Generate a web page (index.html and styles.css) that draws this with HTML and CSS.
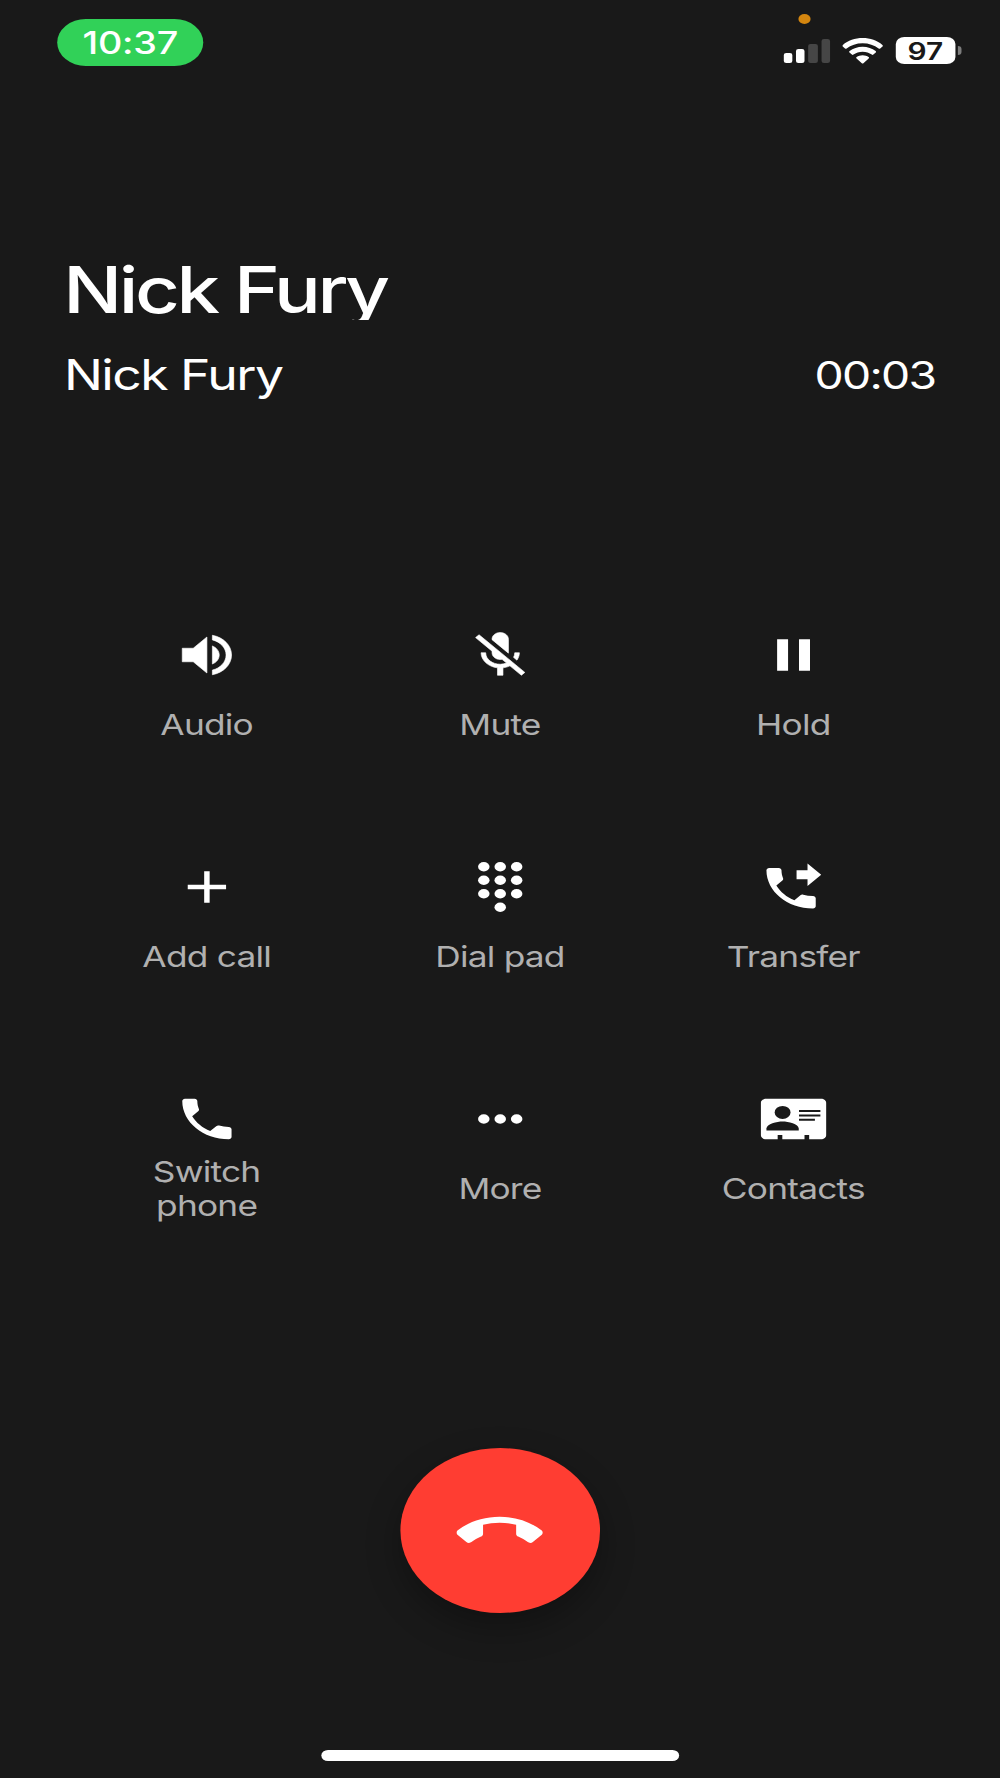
FILE: index.html
```html
<!DOCTYPE html>
<html lang="en">
<head>
    <meta charset="UTF-8">
    <meta name="viewport" content="width=device-width, initial-scale=1.0">
    <title>Call</title>
    <link rel="stylesheet" href="styles.css">
</head>
<body>
    <div class="screen">

        <!-- Status bar -->
        <div class="status-bar">
            <div class="time-pill"><span>10:37</span></div>
            <div class="status-right">
                <div class="mic-dot"></div>
                <div class="status-icons">
                    <div class="signal">
                        <i class="bar bar1"></i>
                        <i class="bar bar2"></i>
                        <i class="bar bar3"></i>
                        <i class="bar bar4"></i>
                    </div>
                    <svg class="wifi" viewBox="0 0 41 26" preserveAspectRatio="none">
                        <path d="M20.5 0C12.8 0 5.8 2.6.6 6.9c-.6.5-.6 1.1-.1 1.6l2.3 2c.5.4 1.1.4 1.6 0C8.7 7.2 14.3 5.2 20.5 5.2s11.8 2 16.1 5.3c.5.4 1.1.4 1.6 0l2.3-2c.5-.5.5-1.1-.1-1.6C35.2 2.6 28.2 0 20.5 0z"/>
                        <path d="M20.5 8.7c-5 0-9.6 1.6-13.1 4.3-.6.5-.6 1.1-.1 1.5l2.4 2.1c.5.4 1.1.4 1.6 0 2.5-1.8 5.7-2.9 9.2-2.9s6.7 1.1 9.2 2.9c.5.4 1.1.4 1.6 0l2.4-2.1c.5-.4.5-1-.1-1.5-3.5-2.7-8.1-4.3-13.1-4.3z"/>
                        <path d="M20.5 17.3c-2.3 0-4.4.7-6 1.8-.6.4-.6 1-.1 1.4l5.3 4.7c.5.4 1.1.4 1.6 0l5.3-4.7c.5-.4.5-1-.1-1.4-1.6-1.1-3.7-1.8-6-1.8z"/>
                    </svg>
                    <div class="battery"><span>97</span></div>
                    <div class="battery-tip"></div>
                </div>
            </div>
        </div>

        <!-- Caller info -->
        <div class="caller">
            <h1 class="caller-name">Nick Fury</h1>
            <div class="caller-row">
                <span class="caller-number">Nick Fury</span>
                <span class="timer">00:03</span>
            </div>
        </div>

        <!-- Call controls -->
        <div class="controls">
            <div class="control">
                <svg class="icon heavy" viewBox="0 0 24 24"><path d="M3 9v6h4l5 5V4L7 9H3zm13.5 3c0-1.77-1.02-3.29-2.5-4.03v8.05c1.48-.73 2.5-2.25 2.5-4.02zM14 3.23v2.06c2.89.86 5 3.54 5 6.71s-2.11 5.85-5 6.71v2.06c4.01-.91 7-4.49 7-8.77s-2.99-7.86-7-8.77z"/></svg>
                <div class="label"><span>Audio</span></div>
            </div>
            <div class="control">
                <svg class="icon heavy" viewBox="0 0 24 24"><path d="M19 11h-1.7c0 .74-.16 1.43-.43 2.05l1.23 1.23c.56-.98.9-2.09.9-3.28zm-4.02.17c0-.06.02-.11.02-.17V5c0-1.66-1.34-3-3-3S9 3.34 9 5v.18l5.98 5.99zM4.27 3L3 4.27l6.01 6.01V11c0 1.66 1.33 3 2.99 3 .22 0 .44-.03.65-.08l1.66 1.66c-.71.33-1.5.52-2.31.52-2.76 0-5.3-2.1-5.3-5.1H5c0 3.41 2.72 6.23 6 6.72V21h2v-3.28c.91-.13 1.77-.45 2.54-.9L19.73 21 21 19.73 4.27 3z"/></svg>
                <div class="label"><span>Mute</span></div>
            </div>
            <div class="control">
                <svg class="icon" viewBox="0 0 24 24"><path d="M6 19h4V5H6v14zm8-14v14h4V5h-4z"/></svg>
                <div class="label"><span>Hold</span></div>
            </div>
            <div class="control">
                <svg class="icon" viewBox="0 0 24 24"><path d="M19 13h-6v6h-2v-6H5v-2h6V5h2v6h6v2z"/></svg>
                <div class="label"><span>Add call</span></div>
            </div>
            <div class="control">
                <svg class="icon" viewBox="0 0 24 24">
                    <circle cx="6" cy="3" r="2.1"/><circle cx="12" cy="3" r="2.1"/><circle cx="18" cy="3" r="2.1"/>
                    <circle cx="6" cy="9" r="2.1"/><circle cx="12" cy="9" r="2.1"/><circle cx="18" cy="9" r="2.1"/>
                    <circle cx="6" cy="15" r="2.1"/><circle cx="12" cy="15" r="2.1"/><circle cx="18" cy="15" r="2.1"/>
                    <circle cx="12" cy="21" r="2.1"/>
                </svg>
                <div class="label"><span>Dial pad</span></div>
            </div>
            <div class="control">
                <svg class="icon" viewBox="0.9 -0.5 24 24"><path d="M18 11l5-5-5-5v3h-4v4h4v3zm2 4.5c-1.25 0-2.45-.2-3.57-.57-.35-.11-.74-.03-1.02.24l-2.2 2.2c-2.83-1.44-5.15-3.75-6.59-6.59l2.2-2.21c.28-.26.36-.65.25-1C8.7 6.45 8.5 5.25 8.5 4c0-.55-.45-1-1-1H4c-.55 0-1 .45-1 1 0 9.39 7.61 17 17 17 .55 0 1-.45 1-1v-3.5c0-.55-.45-1-1-1z"/></svg>
                <div class="label"><span>Transfer</span></div>
            </div>
            <div class="control">
                <svg class="icon" viewBox="0 0 24 24"><path d="M20 15.5c-1.25 0-2.45-.2-3.57-.57-.35-.11-.74-.03-1.02.24l-2.2 2.2c-2.83-1.44-5.15-3.75-6.59-6.59l2.2-2.21c.28-.26.36-.65.25-1C8.7 6.45 8.5 5.25 8.5 4c0-.55-.45-1-1-1H4c-.55 0-1 .45-1 1 0 9.39 7.61 17 17 17 .55 0 1-.45 1-1v-3.5c0-.55-.45-1-1-1z"/></svg>
                <div class="label"><span>Switch<br>phone</span></div>
            </div>
            <div class="control">
                <svg class="icon" viewBox="0 0 24 24"><circle cx="6" cy="12" r="2.1"/><circle cx="12" cy="12" r="2.1"/><circle cx="18" cy="12" r="2.1"/></svg>
                <div class="label"><span>More</span></div>
            </div>
            <div class="control">
                <svg class="icon" viewBox="0 0 24 24">
                    <path d="M2 3h20c1.100 0 2 .9 2 2v14c0 1.100-.9 2-2 2h-4.300v-1.900h-1.700V21H7.900v-1.900H6.200V21H2c-1.100 0-2-.9-2-2V5c0-1.100.9-2 2-2z"/>
                    <g class="cutout">
                        <circle cx="8" cy="9.1" r="2.9"/>
                        <path d="M2.1 17.1v-.9c0-2 3.900-3.100 5.900-3.100s5.900 1.100 5.900 3.100v.9z"/>
                        <path d="M14 8h7.800v.9H14zM14 9.950h7.800v.9H14zM14 11.900h5.800v.9H14z"/>
                    </g>
                </svg>
                <div class="label"><span>Contacts</span></div>
            </div>
        </div>

        <button class="end-call" aria-label="End call">
            <svg viewBox="0 0 24 24"><path d="M12 9c-1.6 0-3.15.25-4.6.72v3.1c0 .39-.23.74-.56.9-.98.49-1.87 1.12-2.66 1.85-.18.18-.43.28-.7.28-.28 0-.53-.11-.71-.29L.29 13.08c-.18-.17-.29-.42-.29-.7 0-.28.11-.53.29-.71C3.34 8.78 7.46 7 12 7s8.66 1.78 11.71 4.67c.18.18.29.43.29.71 0 .28-.11.53-.29.71l-2.48 2.48c-.18.18-.43.29-.71.29-.27 0-.52-.11-.7-.28-.79-.74-1.69-1.36-2.67-1.85-.33-.16-.56-.5-.56-.9v-3.1C15.15 9.25 13.6 9 12 9z"/></svg>
        </button>

        <div class="home-bar"></div>
    </div>
</body>
</html>
```
FILE: styles.css
```css
body {
    margin: 0;
    background-color: #191919;
    font-family: Inter, "Liberation Sans", sans-serif;
    color: #fff;
    overflow: hidden;
}

.screen {
    width: 821.6px;
    height: 1778px;
    transform: scaleX(1.2171);
    transform-origin: 0 0;
    display: flex;
    flex-direction: column;
    align-items: center;
}

/* Status bar */
.status-bar {
    width: 100%;
    height: 100px;
    box-sizing: border-box;
    padding: 0 31.5px 0 47px;
    display: flex;
    justify-content: space-between;
    align-items: flex-start;
}

.time-pill {
    width: 120px;
    height: 47px;
    margin-top: 19px;
    border-radius: 24px;
    background-color: #31d158;
    display: flex;
    justify-content: center;
    align-items: center;
    font-size: 31px;
    font-weight: 500;
    letter-spacing: -0.2px;
}

.status-right {
    display: flex;
    flex-direction: column;
    padding-top: 14px;
}

.mic-dot {
    width: 10px;
    height: 10px;
    border-radius: 50%;
    background-color: #d4860f;
    margin-left: 12px;
    margin-bottom: 13px;
}

.status-icons {
    display: flex;
    align-items: center;
    height: 27px;
}

.signal {
    display: flex;
    align-items: flex-end;
    gap: 3px;
    height: 24px;
    margin-right: 10.5px;
}

.bar {
    width: 7.1px;
    border-radius: 2px;
    background-color: #fff;
}

.bar1 { height: 9.5px; }
.bar2 { height: 14px; }
.bar3 { height: 18.5px; background-color: #464646; }
.bar4 { height: 24px; background-color: #464646; }

.wifi {
    width: 33.5px;
    height: 26px;
    fill: #fff;
    margin-right: 10.5px;
}

.battery {
    width: 48.5px;
    height: 27px;
    border-radius: 7px;
    background-color: #fff;
    color: #191919;
    font-size: 24.5px;
    font-weight: 600;
    display: flex;
    justify-content: center;
    align-items: center;
}

.battery-tip {
    width: 3.5px;
    height: 9px;
    margin-left: 2px;
    border-radius: 0 4px 4px 0;
    background-color: #7d7d7d;
}

/* Caller info */
.caller {
    width: 100%;
    box-sizing: border-box;
    padding: 150px 53px 0 52px;
}

.caller-name {
    margin: 0;
    height: 70px;
    line-height: 79px;
    font-size: 64px;
    font-weight: 500;
    letter-spacing: -2.8px;
    overflow: hidden;
}

.caller-row {
    display: flex;
    justify-content: space-between;
    align-items: center;
    height: 52px;
    margin-top: 29px;
}

.caller-number {
    margin-left: 0.5px;
    margin-top: -2px;
    font-size: 42.5px;
    letter-spacing: -1.3px;
}

.timer {
    font-size: 38px;
    letter-spacing: -1.4px;
}

/* Call controls */
.controls {
    display: grid;
    grid-template-columns: repeat(3, 241px);
    row-gap: 101px;
    margin-top: 227px;
}

.control {
    display: flex;
    flex-direction: column;
    align-items: center;
}

.icon {
    width: 54px;
    height: 54px;
    fill: #fff;
}

.heavy {
    stroke: #fff;
    stroke-width: 0.25;
}

.cutout {
    fill: #191919;
}

.label {
    height: 68px;
    margin-top: 9px;
    display: flex;
    align-items: center;
    text-align: center;
    font-size: 29px;
    line-height: 34px;
    letter-spacing: -0.65px;
    color: #b0b0b0;
}

/* End call */
.end-call {
    width: 164.5px;
    height: 165px;
    margin-top: 225px;
    padding: 0;
    border: none;
    border-radius: 50%;
    background-color: #ff3d32;
    box-shadow: 0 14px 32px rgba(0, 0, 0, 0.3);
    display: flex;
    justify-content: center;
    align-items: center;
}

.end-call svg {
    width: 71px;
    height: 71px;
    margin-top: 2px;
    fill: #fff;
}

.home-bar {
    width: 294px;
    height: 11px;
    margin-top: auto;
    margin-bottom: 17.5px;
    border-radius: 6px;
    background-color: #fff;
}
```
